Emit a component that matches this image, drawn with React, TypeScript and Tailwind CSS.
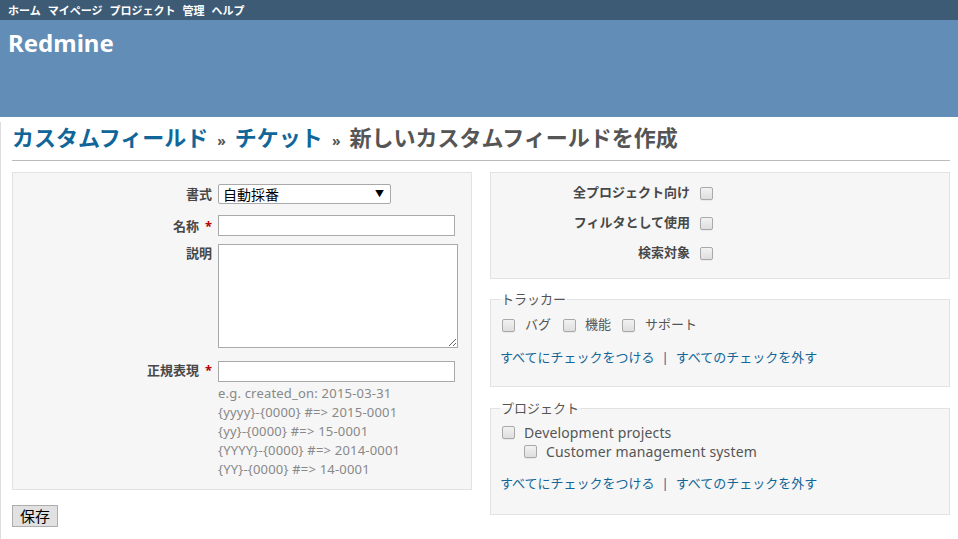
import React from 'react';

const navItems = ['ホーム', 'マイページ', 'プロジェクト', '管理', 'ヘルプ'];

const helpLines = [
  'e.g. created_on: 2015-03-31',
  '{yyyy}-{0000} #=> 2015-0001',
  '{yy}-{0000} #=> 15-0001',
  '{YYYY}-{0000} #=> 2014-0001',
  '{YY}-{0000} #=> 14-0001',
];

function Check() {
  return (
    <input
      type="checkbox"
      className="appearance-none w-[13px] h-[13px] shrink-0 rounded-[2px] border border-[#a9a9a9] bg-gradient-to-b from-[#f2f2f2] to-[#dedede] shadow-[0_1px_0_rgba(0,0,0,0.05)]"
    />
  );
}

function Required() {
  return <span className="text-[#bb0000] ml-[6px]">*</span>;
}

function CheckLinks() {
  return (
    <div className="text-[13px] leading-[20px] text-[#116699]">
      <a>すべてにチェックをつける</a>
      <span className="mx-[7px]">|</span>
      <a>すべてのチェックを外す</a>
    </div>
  );
}

export default function App() {
  return (
    <div className="min-h-screen bg-white text-[#484848] font-['Noto_Sans','Noto_Sans_CJK_JP',sans-serif]">
      <div className="h-[20px] bg-[#3e5b76] flex items-center gap-[7px] px-[8px] text-[11px] font-bold text-white leading-none">
        {navItems.map((n) => (
          <span key={n}>{n}</span>
        ))}
      </div>
      <div className="h-[97px] bg-[#628db6] px-[8px] pt-[8px]">
        <h1 className="text-[24px] leading-[30px] font-bold text-white">Redmine</h1>
      </div>

      <div className="border-l border-[#dddddd] pl-[11px] pr-[8px] pb-[12px]">
        <h2 className="mt-[5px] pb-[4px] text-[22px] leading-[30px] font-bold text-[#555555] border-b border-[#bbbbbb]">
          <a className="text-[#116699]">カスタムフィールド</a>
          <span className="text-[14px] mx-[9px] text-[#555]">»</span>
          <a className="text-[#116699]">チケット</a>
          <span className="text-[14px] mx-[9px] text-[#555]">»</span>
          新しいカスタムフィールドを作成
        </h2>

        <div className="flex gap-[18px] mt-[11px] items-start">
          <div className="w-[460px] flex flex-col">
            <div className="bg-[#f6f6f6] border border-[#e2e2e2] pt-[11px] pb-[10px]">
              <div className="flex">
                <label className="w-[199px] text-right text-[13px] font-bold leading-[18px] pt-[1px]">書式</label>
                <div className="ml-[6px] w-[173px] h-[20px] bg-white border border-[#a9a9a9] rounded-[2px] flex items-center justify-between pl-[4px] pr-[6px] text-[14px] text-black font-['Noto_Sans_CJK_JP',sans-serif]">
                  <span>自動採番</span>
                  <span className="text-[9px]">▼</span>
                </div>
              </div>
              <div className="flex mt-[11px]">
                <label className="w-[199px] text-right text-[13px] font-bold leading-[18px] pt-[2px]">
                  名称<Required />
                </label>
                <input className="ml-[6px] w-[237px] h-[21px] bg-white border border-[#a9a9a9]" />
              </div>
              <div className="flex mt-[8px]">
                <label className="w-[199px] text-right text-[13px] font-bold leading-[18px]">説明</label>
                <textarea className="ml-[6px] w-[240px] h-[104px] bg-white border border-[#a9a9a9]" />
              </div>
              <div className="flex mt-[13px]">
                <label className="w-[199px] text-right text-[13px] font-bold leading-[18px]">
                  正規表現<Required />
                </label>
                <input className="ml-[6px] w-[237px] h-[21px] bg-white border border-[#a9a9a9]" />
              </div>
              <div className="ml-[205px] mt-[2px] text-[13px] leading-[19px] tracking-[0.2px] text-[#888888]">
                {helpLines.map((l) => (
                  <div key={l}>{l}</div>
                ))}
              </div>
            </div>
            <div className="mt-[14px]">
              <button className="w-[46px] h-[22px] bg-[#e1e1e1] border border-[#adadad] text-[15px] leading-none text-black font-['Noto_Sans_CJK_JP',sans-serif]">
                保存
              </button>
            </div>
          </div>

          <div className="w-[460px] flex flex-col">
            <div className="bg-[#f6f6f6] border border-[#e2e2e2] pt-[10px] h-[107px]">
              {['全プロジェクト向け', 'フィルタとして使用', '検索対象'].map((l, i) => (
                <div key={l} className={`flex items-center h-[20px] ${i > 0 ? 'mt-[10px]' : ''}`}>
                  <label className="w-[199px] text-right text-[13px] font-bold">{l}</label>
                  <span className="ml-[10px] flex">
                    <Check />
                  </span>
                </div>
              ))}
            </div>

            <fieldset className="mt-[12px] bg-[#f6f6f6] border border-[#e2e2e2] px-[9px] h-[96px]">
              <legend className="text-[13px] leading-[16px] px-[1px] text-[#555]">トラッカー</legend>
              <div className="flex items-center h-[20px] mt-[8px] text-[13px] text-[#555] pl-[2px]">
                <Check />
                <span className="ml-[10px] mr-[12px]">バグ</span>
                <Check />
                <span className="ml-[9px] mr-[11px]">機能</span>
                <Check />
                <span className="ml-[10px]">サポート</span>
              </div>
              <div className="mt-[12px]">
                <CheckLinks />
              </div>
            </fieldset>

            <fieldset className="mt-[13px] bg-[#f6f6f6] border border-[#e2e2e2] px-[9px] h-[115px]">
              <legend className="text-[13px] leading-[16px] px-[1px] text-[#555]">プロジェクト</legend>
              <div className="flex items-center h-[19px] mt-[7px] text-[14px] tracking-[0.15px] text-[#555] pl-[2px]">
                <Check />
                <span className="ml-[9px]">Development projects</span>
              </div>
              <div className="flex items-center h-[19px] text-[14px] tracking-[0.15px] text-[#555] pl-[24px]">
                <Check />
                <span className="ml-[9px]">Customer management system</span>
              </div>
              <div className="mt-[12px]">
                <CheckLinks />
              </div>
            </fieldset>
          </div>
        </div>
      </div>
    </div>
  );
}
